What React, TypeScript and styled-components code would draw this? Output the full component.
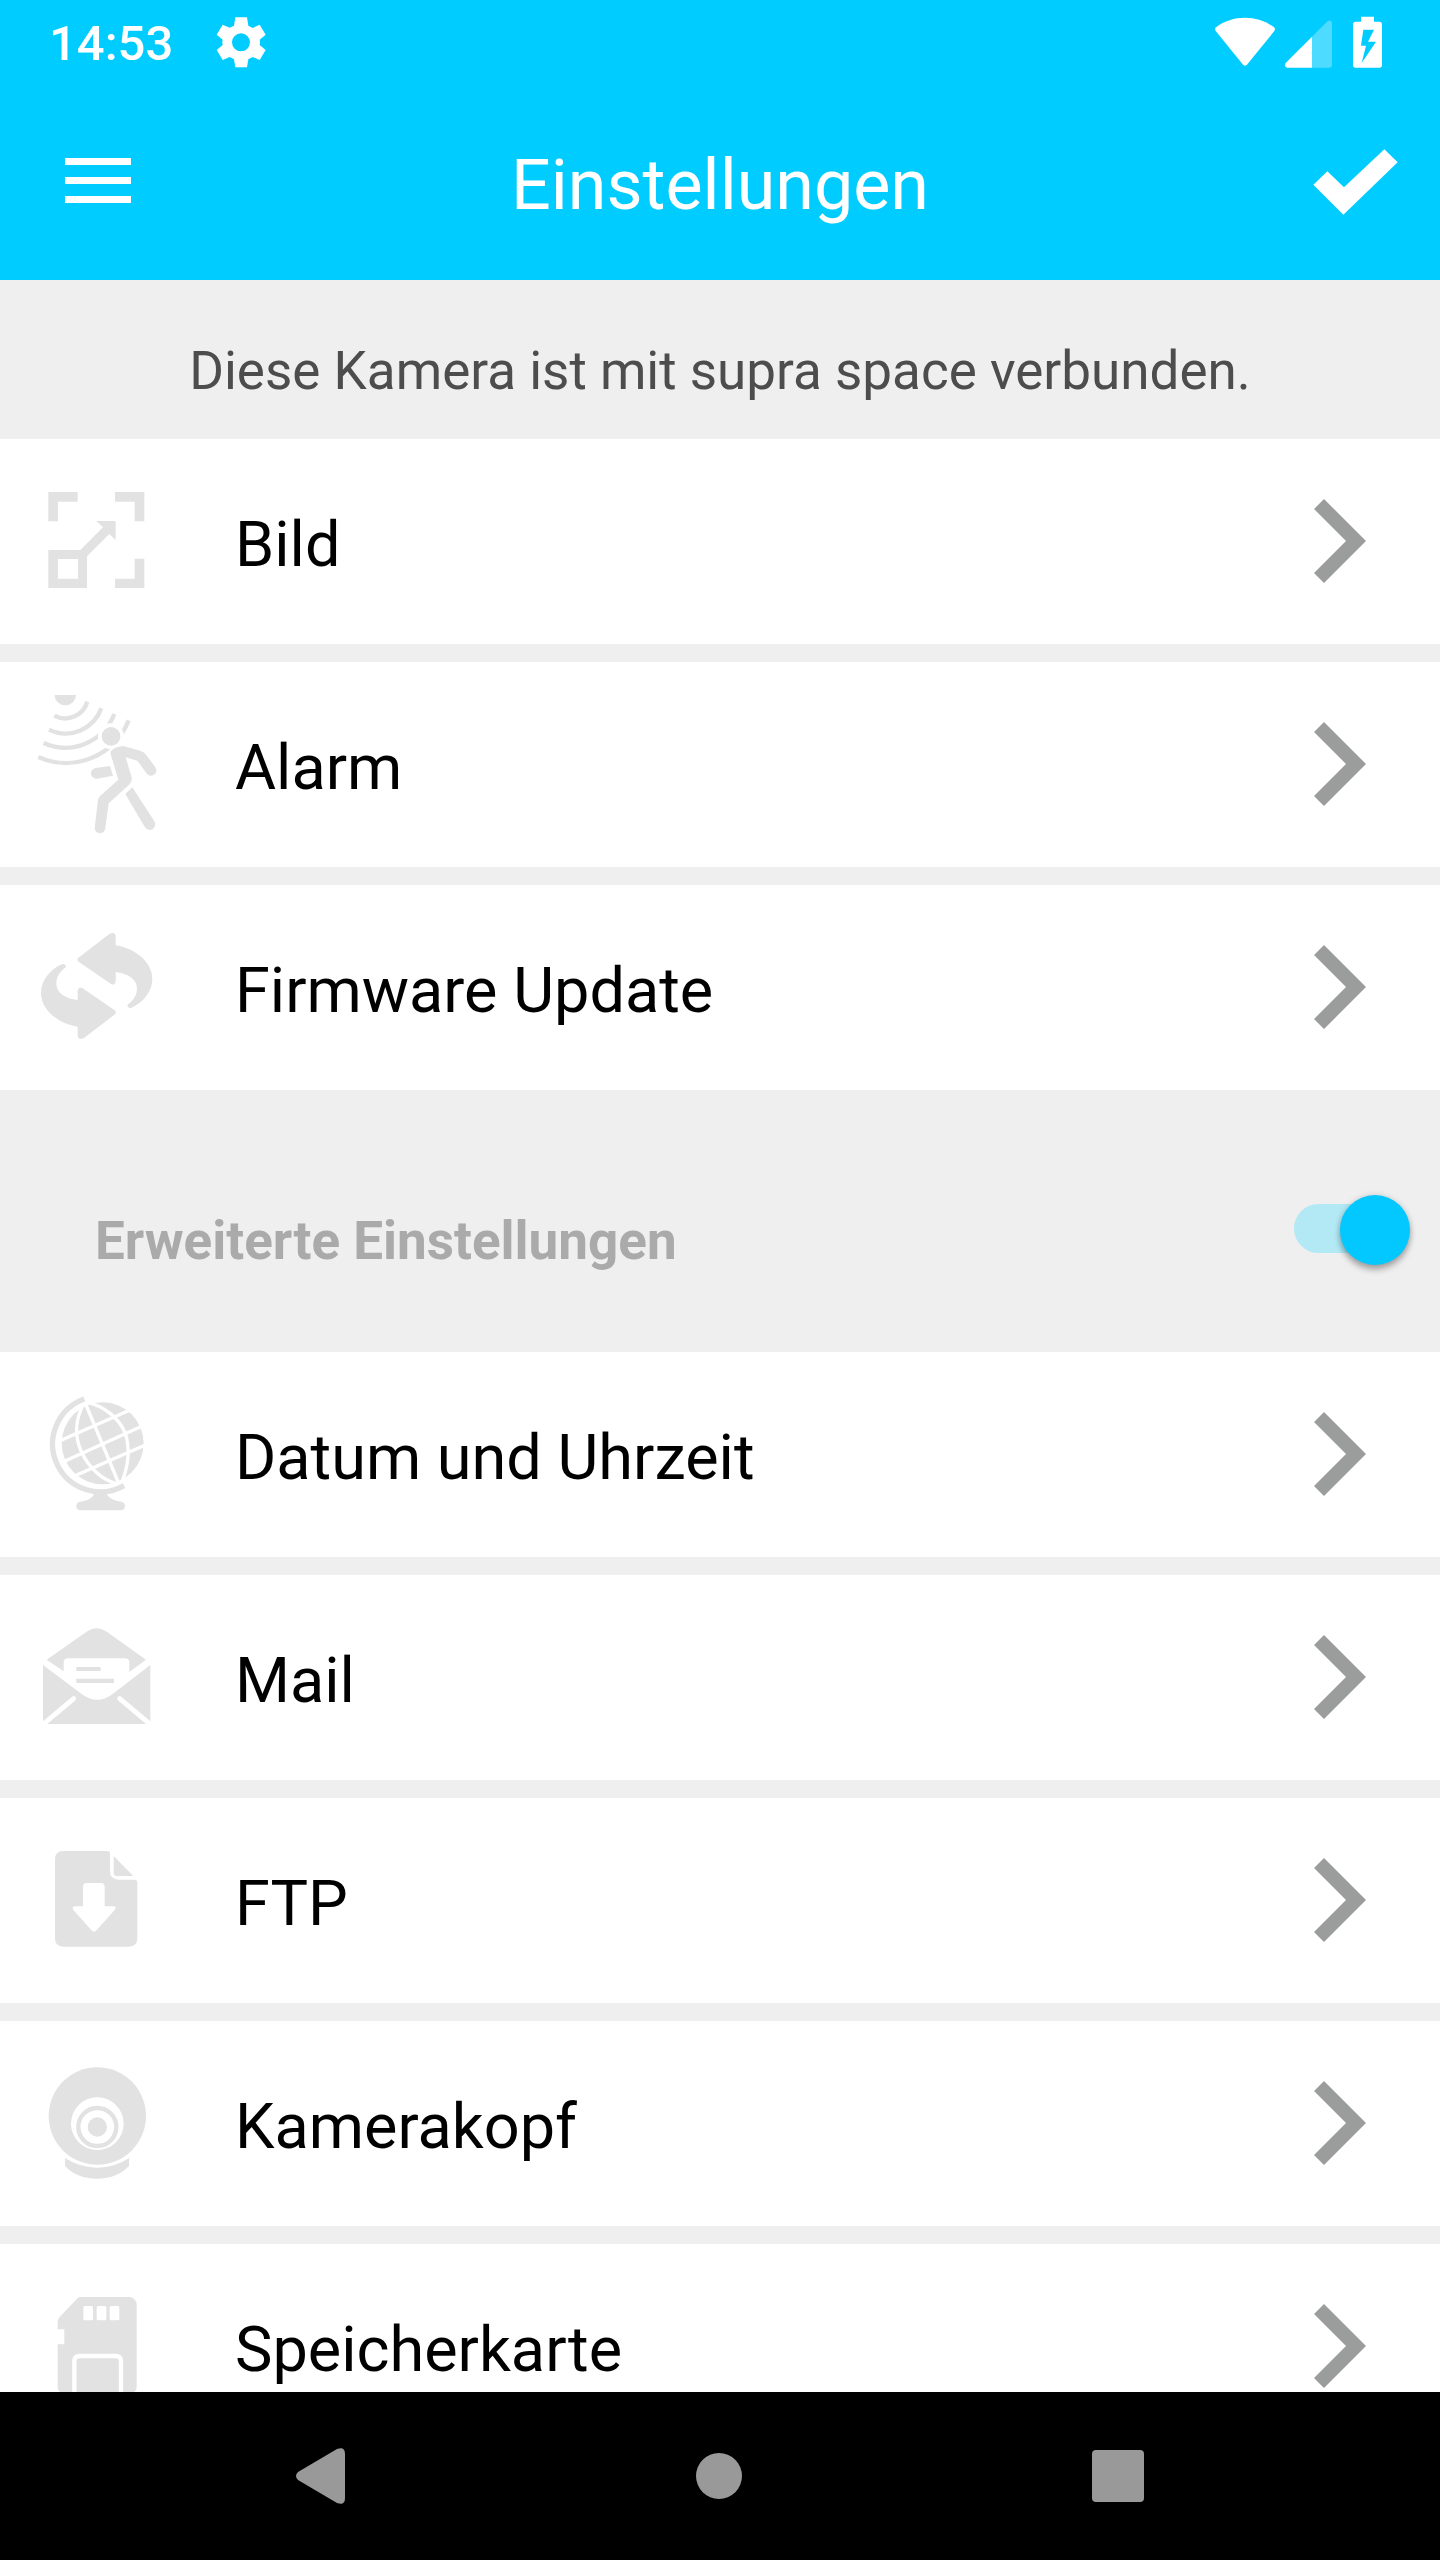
import React, { useState } from "react";
import styled, { createGlobalStyle } from "styled-components";

const colors = {
  brand: "#00ccff",
  page: "#efefef",
  icon: "#e2e2e2",
  chevron: "#9b9d9c",
  nav: "#999999",
};

const GlobalStyle = createGlobalStyle`
  * { box-sizing: border-box; }
  body { margin: 0; font-family: Roboto, "Noto Sans", sans-serif; background: ${colors.page}; }
  button { font: inherit; color: inherit; border: 0; padding: 0; margin: 0; background: none; cursor: pointer; }
  svg { display: block; }
`;

const Screen = styled.div`
  height: 100vh;
  display: flex;
  flex-direction: column;
  background: ${colors.page};
`;

const StatusBar = styled.div`
  flex: none;
  height: 84px;
  padding: 0 57px 0 49px;
  display: flex;
  align-items: center;
  gap: 43px;
  background: ${colors.brand};
  color: #fff;
`;

const Clock = styled.time`
  padding-top: 4px;
  font-size: 49px;
  line-height: 56px;
  font-weight: 500;
`;

const StatusIcons = styled.div`
  margin-left: auto;
`;

const AppBar = styled.header`
  flex: none;
  height: 196px;
  padding: 0 42px;
  display: grid;
  grid-template-columns: 1fr auto 1fr;
  align-items: center;
  background: ${colors.brand};
  color: #fff;
`;

const Title = styled.h1`
  margin: 0;
  padding-top: 6px;
  font-size: 70px;
  line-height: 80px;
  font-weight: 400;
`;

const BarButton = styled.button<{ $side: "start" | "end" }>`
  justify-self: ${(p) => p.$side};
  padding-left: ${(p) => (p.$side === "start" ? "23px" : "0")};
`;

const Content = styled.main`
  flex: 1;
  min-height: 0;
  overflow-y: auto;
  scrollbar-width: none;
`;

const Notice = styled.p`
  margin: 0;
  padding: 61px 24px 38px;
  text-align: center;
  font-size: 53px;
  line-height: 60px;
  color: #4d4d4d;
`;

const List = styled.ul`
  margin: 0;
  padding: 0;
  list-style: none;
  display: grid;
  gap: 18px;
`;

const RowButton = styled.button`
  width: 100%;
  height: 205px;
  padding: 0 74px 0 26px;
  display: flex;
  align-items: center;
  background: #fff;
  color: #000;
  text-align: left;
`;

const RowLabel = styled.span`
  flex: 1;
  padding: 6px 24px 0 68px;
  font-size: 63px;
  line-height: 74px;
`;

const Section = styled.div`
  height: 262px;
  padding: 18px 30px 0 95px;
  display: flex;
  align-items: center;
  justify-content: space-between;
`;

const SectionLabel = styled.label`
  padding-top: 22px;
  font-size: 53px;
  line-height: 60px;
  font-weight: 700;
  color: #aaaaaa;
`;

const Switch = styled.input`
  appearance: none;
  position: relative;
  flex: none;
  width: 116px;
  height: 70px;
  margin: 0;
  cursor: pointer;

  &::before {
    content: "";
    position: absolute;
    inset: 9px 11px 12px 0;
    border-radius: 25px;
    background: #c4c4c4;
  }
  &::after {
    content: "";
    position: absolute;
    left: 0;
    top: 0;
    width: 70px;
    height: 70px;
    border-radius: 50%;
    background: #fafafa;
    box-shadow: 0 5px 6px rgba(0, 0, 0, 0.28), 0 0 6px rgba(0, 0, 0, 0.14);
  }
  &:checked::before { background: #b2e9f5; }
  &:checked::after { left: 46px; background: #03c8ff; }
`;

const NavBar = styled.nav`
  flex: none;
  height: 168px;
  padding: 0 123px 0 121px;
  display: grid;
  grid-template-columns: repeat(3, 1fr);
  background: #000;
`;

const NavButton = styled.button`
  display: grid;
  place-items: center;
`;

const RowIcon = ({ top, children }: { top: number; children: React.ReactNode }) => (
  <svg width="141" height="141" viewBox={`78 ${top} 423 423`} fill={colors.icon} aria-hidden="true">
    {children}
  </svg>
);

const ScaleIcon = () => (
  <RowIcon top={123}>
    <path d="M145 186H233V215H174V274H145ZM345 186H433V274H404V215H345ZM404 386H433V474H345V446H404Z" />
    <path fillRule="evenodd" d="M145 360H241L309 292L289 273H347V330L328 312L261 379V474H145ZM174 387V446H234V387Z" />
  </RowIcon>
);

const MotionIcon = () => (
  <RowIcon top={102}>
    <path d="M164 105H228A32 31 0 0 1 164 105Z" />
    <g fill="none" stroke={colors.icon} strokeWidth="13">
      <path d="M262 125A69 69 0 0 1 163 167" />
      <path d="M304 145A114 114 0 0 1 147 209" />
      <path d="M343 162A158 158 0 0 1 131 249" />
      <path d="M386 181A202 202 0 0 1 115 291" />
    </g>
    <circle cx="333" cy="229" r="39" fill="#fff" />
    <circle cx="333" cy="229" r="28" />
    <path d="M331 279Q333 263 370 258L423 273Q432 276 438 284L465 320A16 16 0 0 1 441 342L412 302L377 292L395 352Q397 366 387 374L326 430L316 505A16 16 0 0 1 284 503L294 420Q295 413 301 407L355 359Z" />
    <path d="M287 324L330 318L339 347L291 356A16 16 0 0 1 287 324Z" />
    <path d="M397 382L463 484A16 16 0 0 1 435 502L376 402Z" />
  </RowIcon>
);

const swapArrow =
  "M235 233L328 162Q346 153 347 170V196C412 207 457 250 457 297C457 333 432 366 395 383Q384 386 382 375C402 360 411 345 411 325C411 299 385 280 347 276V303Q345 319 332 311L236 245Q229 239 235 233Z";

const UpdateIcon = () => (
  <RowIcon top={111}>
    <path d={swapArrow} />
    <path d={swapArrow} transform="rotate(180 290 318)" />
  </RowIcon>
);

const GlobeIcon = () => (
  <RowIcon top={102}>
    <circle cx="308" cy="280" r="123" />
    <g fill="none" stroke="#fff" strokeWidth="10">
      <path d="M180 272L392 179M190 335L422 230M218 380L436 285" />
      <path d="M254 155L357 402" />
      <path d="M252 158C222 215 226 265 244 305C268 355 305 388 352 402" />
      <path d="M262 158C315 168 358 207 376 250C390 295 386 345 366 395" />
    </g>
    <path d="M253 147A143.5 143.5 0 1 0 372 407" fill="none" stroke={colors.icon} strokeWidth="16" />
    <path d="M284 428H318Q326 447 355 454Q375 455 375 468Q375 481 361 481H243Q229 481 229 468Q229 455 249 454Q278 447 284 428Z" />
  </RowIcon>
);

const MailIcon = () => (
  <RowIcon top={111}>
    <path d="M140 269L262 184Q290 165 318 184L438 269L388 306V278Q388 265 375 265H204Q191 265 191 278V304Z" />
    <path d="M129 285L248 374Q292 404 335 374L451 285V462H129Z" />
    <path d="M122 469L221 386M458 469L359 386" stroke="#fff" strokeWidth="15" strokeLinecap="round" />
    <path d="M229 291H302V303H229ZM229 326H342V339H229Z" />
  </RowIcon>
);

const DownloadIcon = () => (
  <RowIcon top={90}>
    <path d="M190 153H322Q330 153 330 161V213Q330 239 356 239H404Q412 239 412 247V415Q412 440 387 440H190Q165 440 165 415V178Q165 153 190 153Z" />
    <path d="M341 168L400 228H350Q341 228 341 219Z" />
    <path fill="#fff" d="M260 249H303Q314 249 314 260V319H340Q352 320 344 330L293 387Q282 403 271 387L220 330Q214 320 225 319H249V260Q249 249 260 249Z" />
  </RowIcon>
);

const CameraIcon = () => (
  <RowIcon top={99}>
    <circle cx="292" cy="288" r="146" />
    <circle cx="292" cy="311" r="79" fill="#fff" />
    <circle cx="292" cy="321" r="57" fill="#fff" stroke={colors.icon} strokeWidth="13" />
    <circle cx="292" cy="321" r="29" />
    <path d="M195 414Q240 443 292 443Q345 443 387 414V438Q350 476 292 476Q230 476 195 438Z" />
  </RowIcon>
);

const CardIcon = () => (
  <RowIcon top={138}>
    <path d="M240 201H388Q396 201 403 208Q410 215 410 223V470Q410 488 392 488H191Q173 488 173 470V343H193V298H173V275Q173 267 179 261L231 206Q235 201 240 201Z" />
    <g fill="#fff">
      <rect x="250" y="228" width="29" height="43" rx="5" />
      <rect x="290" y="228" width="29" height="43" rx="5" />
      <rect x="329" y="228" width="29" height="43" rx="5" />
    </g>
    <path d="M223 490V394Q223 378 239 378H347Q363 378 363 394V490" fill="none" stroke="#fff" strokeWidth="13" />
  </RowIcon>
);

const Chevron = () => (
  <svg width="52" height="86" viewBox="0 0 52 86" fill={colors.chevron} aria-hidden="true">
    <path d="M10 0L52 42L10 84L0 74L32 42L0 10Z" />
  </svg>
);

type Item = { label: string; Icon: () => React.ReactElement };

const basicItems: Item[] = [
  { label: "Bild", Icon: ScaleIcon },
  { label: "Alarm", Icon: MotionIcon },
  { label: "Firmware Update", Icon: UpdateIcon },
];

const advancedItems: Item[] = [
  { label: "Datum und Uhrzeit", Icon: GlobeIcon },
  { label: "Mail", Icon: MailIcon },
  { label: "FTP", Icon: DownloadIcon },
  { label: "Kamerakopf", Icon: CameraIcon },
  { label: "Speicherkarte", Icon: CardIcon },
];

const SettingsList = ({ items }: { items: Item[] }) => (
  <List>
    {items.map(({ label, Icon }) => (
      <li key={label}>
        <RowButton type="button">
          <Icon />
          <RowLabel>{label}</RowLabel>
          <Chevron />
        </RowButton>
      </li>
    ))}
  </List>
);

export default function App() {
  const [advanced, setAdvanced] = useState(true);

  return (
    <Screen>
      <GlobalStyle />
      <StatusBar>
        <Clock>14:53</Clock>
        <svg width="51" height="53" viewBox="648 47 153 159" aria-hidden="true">
          <path
            fill="#fff"
            fillRule="evenodd"
            d="M706 51H741L745 76L758 83L779 73L797 103L779 118Q781 126 779 134L797 149L779 179L758 170L745 177L741 201H706L702 177L689 170L668 179L650 149L668 134Q666 126 668 118L650 103L668 73L689 82L702 76ZM723 99A27 27 0 1 0 723 153A27 27 0 1 0 723 99Z"
          />
        </svg>
        <StatusIcons>
          <svg width="168" height="53" viewBox="165 46 504 159" fill="#fff" aria-hidden="true">
            <path d="M168 80C218 42 292 42 342 80Q347 85 343 91L262 191Q255 199 248 191L167 91Q163 85 168 80Z" />
            <path d="M500 64Q516 54 516 68V193Q516 201 508 201H456V108Z" opacity="0.3" />
            <path d="M456 108V201H382Q370 198 377 187Z" />
            <path
              fillRule="evenodd"
              d="M603 48H642V63H658Q666 63 666 71V193Q666 201 658 201H587Q579 201 579 193V71Q579 63 587 63H603ZM610 87L603 135H618L605 187L648 123H624L642 87Z"
            />
          </svg>
        </StatusIcons>
      </StatusBar>
      <AppBar>
        <BarButton type="button" $side="start" aria-label="Menü">
          <svg width="66" height="48" viewBox="0 0 66 48" fill="#fff" aria-hidden="true">
            <path d="M0 0H66V7H0ZM0 19H66V26H0ZM0 38H66V45H0Z" />
          </svg>
        </BarButton>
        <Title>Einstellungen</Title>
        <BarButton type="button" $side="end" aria-label="Speichern">
          <svg width="85" height="66" viewBox="458 450 255 198" fill="#fff" aria-hidden="true">
            <path d="M459 557L501 517L551 565L672 451L712 490L549 647Z" />
          </svg>
        </BarButton>
      </AppBar>
      <Content>
        <Notice>Diese Kamera ist mit supra space verbunden.</Notice>
        <SettingsList items={basicItems} />
        <Section>
          <SectionLabel htmlFor="advanced">Erweiterte Einstellungen</SectionLabel>
          <Switch
            id="advanced"
            type="checkbox"
            role="switch"
            checked={advanced}
            onChange={(e) => setAdvanced(e.target.checked)}
          />
        </Section>
        {advanced && <SettingsList items={advancedItems} />}
      </Content>
      <NavBar>
        <NavButton type="button" aria-label="Zurück">
          <svg width="49" height="56" viewBox="0 0 49 56" fill={colors.nav} aria-hidden="true">
            <path d="M2 24L41 1Q49 -2 49 6V50Q49 58 41 55L2 32Q-2 28 2 24Z" />
          </svg>
        </NavButton>
        <NavButton type="button" aria-label="Startbildschirm">
          <svg width="46" height="46" viewBox="0 0 46 46" fill={colors.nav} aria-hidden="true">
            <circle cx="23" cy="23" r="23" />
          </svg>
        </NavButton>
        <NavButton type="button" aria-label="Letzte Apps">
          <svg width="52" height="52" viewBox="0 0 52 52" fill={colors.nav} aria-hidden="true">
            <rect width="52" height="52" rx="4" />
          </svg>
        </NavButton>
      </NavBar>
    </Screen>
  );
}
